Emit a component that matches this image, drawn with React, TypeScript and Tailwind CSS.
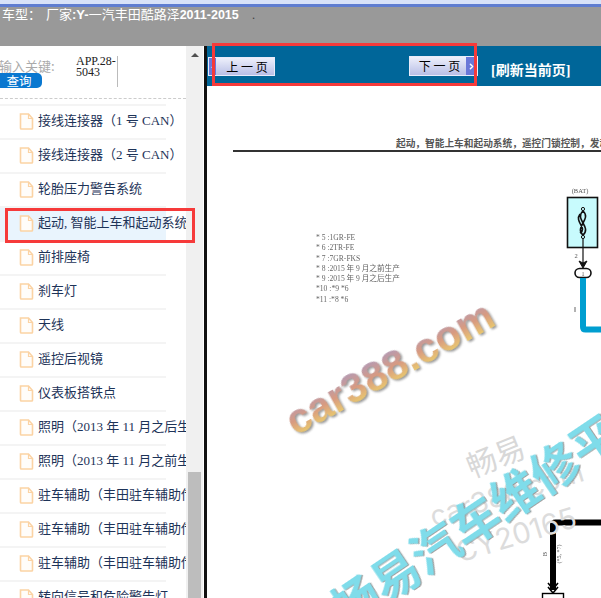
import React from "react";
import { ChevronRight } from "lucide-react";

const rows = [
  "接线连接器（1 号 CAN）",
  "接线连接器（2 号 CAN）",
  "轮胎压力警告系统",
  "起动, 智能上车和起动系统",
  "前排座椅",
  "刹车灯",
  "天线",
  "遥控后视镜",
  "仪表板搭铁点",
  "照明（2013 年 11 月之后生产）",
  "照明（2013 年 11 月之前生产）",
  "驻车辅助（丰田驻车辅助传感器）",
  "驻车辅助（丰田驻车辅助传感器）",
  "驻车辅助（丰田驻车辅助传感器）",
  "转向信号和危险警告灯",
];

const legend = [
  "* 5 :1GR-FE",
  "* 6 :2TR-FE",
  "* 7 :7GR-FKS",
  "* 8 :2015 年 9 月之前生产",
  "* 9 :2015 年 9 月之后生产",
  "*10 :*9 *6",
  "*11 :*8 *6",
];

const cjk = "font-['Liberation_Serif','Noto_Sans_CJK_SC',serif]";

function FileIcon() {
  return (
    <svg width="15" height="17" viewBox="0 0 15 17" fill="none" className="shrink-0">
      <path d="M1.5 1H9.5L13.5 5.5V15.2Q13.5 16 12.7 16H2.3Q1.5 16 1.5 15.2Z" stroke="#fbd3a4" strokeWidth="1.6" fill="#fffdfa" />
      <path d="M9.5 1V5.5H13.5" stroke="#fbd3a4" strokeWidth="1.2" />
    </svg>
  );
}

function PageButton({ label, next }: { label: string; next?: boolean }) {
  return (
    <div className={`flex items-center border border-[#e8ebfa] bg-gradient-to-b from-[#eef0fb] to-[#b9bfe6] text-[12px] text-black ${next ? "h-[20px] w-[69px] pl-[3px]" : "h-[19px] w-[67px]"}`}>
      {!next && (
        <span className="flex h-full w-[7px] items-center justify-center bg-[#6a78d8]">
          <span className="text-[7px] leading-none text-white">◂</span>
        </span>
      )}
      <span className={`flex-1 whitespace-pre text-center font-['Noto_Sans_CJK_SC',sans-serif] ${next ? "" : "pl-[4px]"}`}>{label}</span>
      {next && (
        <span className="flex h-full w-[11px] items-center justify-center bg-[#6a78d8]">
          <ChevronRight size={9} strokeWidth={4} color="#fff" />
        </span>
      )}
    </div>
  );
}

function Sidebar() {
  return (
    <aside className="flex h-full w-[204px] shrink-0 overflow-hidden bg-white">
      <div className="w-[186px] shrink-0 overflow-hidden">
        <div className="flex h-[52px] items-start">
          <div className="w-[76px] shrink-0 overflow-hidden pt-[12px]">
            <div className="-ml-[1px] h-[15px] whitespace-nowrap font-['Noto_Sans_CJK_SC',sans-serif] text-[13px] leading-[15px] text-[#aaa]">输入关键:</div>
            <div className="h-[15px] w-[42px] rounded-r-[5px] bg-[#0a78d0] pr-[4px] text-center font-['Noto_Sans_CJK_SC',sans-serif] text-[12.5px] leading-[15px] text-white">查询</div>
          </div>
          <div className={`mt-[10px] h-[31px] w-[42px] border-r border-[#bbb] text-[12px] leading-[11px] text-[#222] ${cjk}`}>APP.28-5043</div>
        </div>
        <div className="h-px w-[186px] border-t border-dashed border-[#ccc]" />
        {rows.map((row, i) => (
          <div
            key={i}
            className={`flex h-[34px] w-[166px] items-center border-t-2 border-[#f4f4f4] pb-[2px] pl-[19px] ${i === 0 ? "mt-[5px]" : ""} ${i === 3 ? "bg-[#e9f4fd]" : ""}`}
          >
            <FileIcon />
            <span className={`ml-[4px] whitespace-nowrap text-[13px] text-[#1d3358] ${cjk}`}>{row}</span>
          </div>
        ))}
      </div>
      <div className="flex h-full w-[17px] shrink-0 flex-col bg-[#f0f0f0]">
        <div className="flex h-[17px] items-center justify-center">
          <div className="h-0 w-0 border-x-[4px] border-b-[4px] border-x-transparent border-b-[#505050]" />
        </div>
        <div className="mx-[2px] mt-[409px] h-[126px] bg-[#bdbdbd]" />
      </div>
    </aside>
  );
}

function Diagram() {
  return (
    <div className="relative flex-1 overflow-hidden bg-white">
      <div className="ml-[26px] mt-[51px] border-b-2 border-[#333]">
        <div className="ml-[163px] whitespace-nowrap font-['Noto_Sans_CJK_SC',serif] text-[9.7px] font-bold leading-[13px] text-[#555]">
          起动，智能上车和起动系统，遥控门锁控制，发动机控制系统
        </div>
      </div>
      <div className="ml-[109px] mt-[81px] font-['Liberation_Serif','Noto_Sans_CJK_SC',serif] text-[7.6px] leading-[10.3px] text-[#666] blur-[0.3px]">
        {legend.map((line) => (
          <div key={line} className="whitespace-pre">{line}</div>
        ))}
      </div>

      {/* wiring drawing, coordinates are the page's own */}
      <svg className="absolute left-0 top-0 blur-[0.3px]" width="394" height="512" viewBox="0 0 394 512" fill="none">
        <text x="373" y="107" fontSize="6.5" fill="#555" textAnchor="middle" fontFamily="Liberation Serif">(BAT)</text>
        <rect x="360.5" y="111.5" width="30" height="50" fill="#c8fbfd" stroke="#111" strokeWidth="1.6" />
        <circle cx="376" cy="123" r="1.6" stroke="#111" />
        <circle cx="376" cy="151" r="1.6" stroke="#111" />
        <path d="M376 125C367 133 385 141 376 149M376 125C385 133 367 141 376 149M373 128C367 136 381 142 373 147" stroke="#111" strokeWidth="1.6" />
        <path d="M376 153V178" stroke="#111" strokeWidth="1.2" />
        <path d="M372 175L376 182L380 175L376 177Z" fill="#111" stroke="#111" />
        <text x="369" y="172" fontSize="6.5" fill="#555" textAnchor="middle" fontFamily="Liberation Serif">2</text>
        <rect x="368" y="182.5" width="16" height="9" rx="4.5" fill="#fff" stroke="#111" strokeWidth="1.6" />
        <text x="376" y="189.5" fontSize="6" fill="#555" textAnchor="middle" fontFamily="Liberation Serif">1</text>
        <path d="M376 192V241Q376 243.500 378.500 243.500H394" stroke="#009ed0" strokeWidth="6" />
        <path d="M368 221V226" stroke="#666" strokeWidth="1" />
        <path d="M346 504V439Q346 436.500 348.500 436.500H394" stroke="#000" strokeWidth="6" />
        <path d="M341 497L346 503L351 497M341 501L346 507L351 501" stroke="#000" strokeWidth="1.6" />
        <rect x="335.500" y="507.500" width="21" height="10" fill="#fff" stroke="#000" strokeWidth="1.400" />
        <text transform="translate(340 468) rotate(-90)" fontSize="6.5" fill="#555" fontFamily="Liberation Serif" textAnchor="middle">B</text>
        <text transform="translate(354 468) rotate(-90)" fontSize="6" fill="#555" fontFamily="Liberation Serif" textAnchor="middle">(*5, *7)</text>
      </svg>

      {/* watermarks */}
      <div className="absolute left-[67px] top-[260px] w-[236px] -rotate-[29deg] whitespace-nowrap bg-gradient-to-b from-[#a898c0] via-[#d89a80] to-[#f0dc60] bg-clip-text font-['Liberation_Sans',sans-serif] text-[42px] font-bold leading-none text-transparent drop-shadow-[1px_2px_1px_rgba(80,80,80,0.6)]">
        car388.com
      </div>
      <div className="absolute left-[258px] top-[354px] -rotate-[22deg] whitespace-nowrap font-['Noto_Sans_CJK_SC',sans-serif] text-[30px] leading-none text-[#d8d8d8]">畅易</div>
      <div className="absolute left-[220px] top-[394px] -rotate-[17deg] whitespace-nowrap font-['Inter',sans-serif] text-[28px] leading-none text-[#dcdcdc]">car388.com</div>
      <div className="absolute left-[247px] top-[434px] -rotate-[17deg] whitespace-nowrap font-['Inter',sans-serif] text-[29px] leading-none text-[#dcdcdc]">CY20165</div>
      <div className="absolute left-[94px] top-[395px] -rotate-[34deg] whitespace-nowrap font-['Noto_Sans_CJK_SC',sans-serif] text-[48px] font-bold leading-none text-[#7fdcea] drop-shadow-[1px_1px_0_rgba(120,120,120,0.7)]">
        畅易汽车维修平台
      </div>
    </div>
  );
}

export default function App() {
  return (
    <div className="relative flex h-[598px] w-[601px] flex-col overflow-hidden bg-white">
      <div className="h-[4px] shrink-0 bg-[#d8e2f8]" />
      <div className="h-[3px] shrink-0 bg-[#5f7dd0]" />
      <header className="h-[39px] shrink-0 bg-[#999999] pl-[2px] pt-[1px]">
        <div className="flex items-baseline whitespace-nowrap font-['Liberation_Sans','Noto_Sans_CJK_SC',sans-serif] text-[13px] leading-[14px] text-white">
          <span>车型：</span>
          <span className="ml-[5px]">厂家</span>
          <span className="font-bold">:Y-</span>
          <span>一汽丰田酷路泽</span>
          <span className="text-[12.5px] font-bold">2011-2015</span>
          <span className="ml-[13px] text-[#444]">.</span>
        </div>
      </header>
      <div className="flex min-h-0 flex-1">
        <Sidebar />
        <div className="w-[3px] shrink-0 bg-[#111]" />
        <main className="flex min-w-0 flex-1 flex-col">
          <div className="flex h-[40px] shrink-0 items-start bg-[#006699] pl-[1px]">
            <div className="mt-[11px]"><PageButton label="上 一 页" /></div>
            <div className="ml-[134px] mt-[10px]"><PageButton label="下 一 页" next /></div>
            <div className="ml-[13px] mt-[16px] whitespace-nowrap font-['Liberation_Serif','Noto_Sans_CJK_SC',serif] text-[14px] font-bold leading-[18px] text-white">[刷新当前页]</div>
          </div>
          <Diagram />
        </main>
      </div>

      {/* red annotation boxes drawn on top of the shot */}
      <div className="absolute left-[212px] top-[43px] h-[43px] w-[265px] border-[3px] border-[#f63a3a]" />
      <div className="absolute left-[5px] top-[208px] h-[35px] w-[190px] border-[3px] border-[#f63a3a]" />
    </div>
  );
}
